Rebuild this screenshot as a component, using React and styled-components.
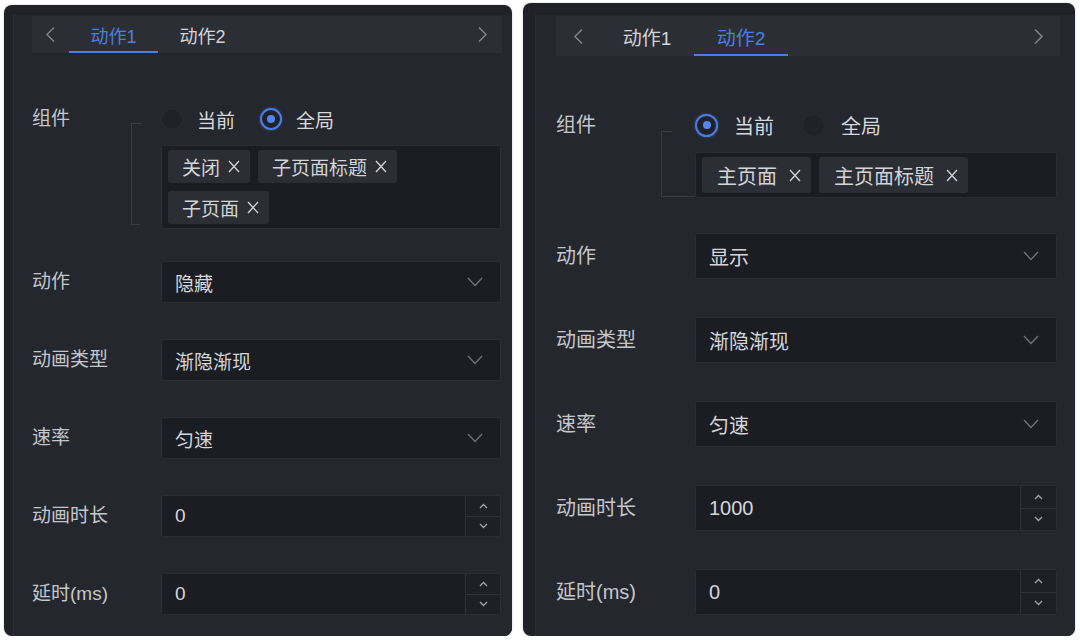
import React from "react"
import styled, { createGlobalStyle, ThemeProvider } from "styled-components"

const GlobalStyle = createGlobalStyle`
  html, body {
    margin: 0;
    background: #ffffff;
  }
  body {
    font-family: "Liberation Sans", "Noto Sans CJK SC", sans-serif;
    -webkit-font-smoothing: antialiased;
  }
  * {
    box-sizing: border-box;
  }
`

// the two screenshots were taken at slightly different zoom levels
const leftTheme = {
  top: 5,
  width: 508,
  height: 631,
  strip: 9,
  stripTop: 10,
  padL: 19,
  padR: 10,
  fieldInset: 1,
  tabBarH: 37,
  arrowW: 37,
  arrowEndW: 40,
  tabW: 89,
  tabFont: 18,
  font: 19,
  tagFont: 19,
  labelW: 129,
  radioGap: 54,
  radioRowH: 24,
  radioSize: 22,
  radioTextGap: 14,
  radioItemGap: 25,
  tagBoxGap: 14,
  tagH: 33,
  tagPadL: 14,
  tagPadR: 10,
  tagXGap: 8,
  formGap: 32,
  fieldH: 42,
  rowGap: 36,
  stepperW: 35,
  bracketLeft: -30,
  bracketTop: 16,
  bracketBottom: 4,
  bracketTopTick: 9,
  bracketBottomTick: 9,
}

const rightTheme = {
  top: 3,
  width: 552,
  height: 633,
  strip: 12,
  stripTop: 12,
  padL: 21,
  padR: 15,
  fieldInset: 3,
  tabBarH: 40,
  arrowW: 44,
  arrowEndW: 44,
  tabW: 94,
  tabFont: 19,
  font: 20,
  tagFont: 20,
  labelW: 139,
  radioGap: 56,
  radioRowH: 26,
  radioSize: 23,
  radioTextGap: 16,
  radioItemGap: 28,
  tagBoxGap: 14,
  tagH: 36,
  tagPadL: 15,
  tagPadR: 10,
  tagXGap: 12,
  formGap: 35,
  fieldH: 46,
  rowGap: 38,
  stepperW: 36,
  bracketLeft: -34,
  bracketTop: 19,
  bracketBottom: 1,
  bracketTopTick: 10,
  bracketBottomTick: 34,
}

const Page = styled.div`
  display: flex;
  align-items: flex-start;
  gap: 11px;
  padding-left: 4px;
`

const Panel = styled.section`
  margin-top: ${(p) => p.theme.top}px;
  width: ${(p) => p.theme.width}px;
  height: ${(p) => p.theme.height}px;
  padding: ${(p) => p.theme.stripTop}px 0 0 ${(p) => p.theme.strip}px;
  background: #202227;
  border-radius: 8px;
  overflow: hidden;
  display: flex;
  box-shadow: 0 0 2px rgba(0, 0, 0, 0.25);
`

const Body = styled.div`
  flex: 1;
  background: #25272e;
  border-left: 1px solid #2c2e35;
  padding: 1px ${(p) => p.theme.padR}px 0 ${(p) => p.theme.padL - 1}px;
  display: flex;
  flex-direction: column;
`

const TabBar = styled.div`
  display: flex;
  align-items: stretch;
  height: ${(p) => p.theme.tabBarH}px;
  background: #2c2e36;
`

const ArrowButton = styled.div`
  width: ${(p) => (p.$end ? p.theme.arrowEndW : p.theme.arrowW)}px;
  display: flex;
  align-items: center;
  justify-content: center;
  color: #80838b;
  margin-left: ${(p) => (p.$end ? "auto" : "0")};
`

const Tab = styled.div`
  width: ${(p) => p.theme.tabW}px;
  display: flex;
  align-items: center;
  justify-content: center;
  font-size: ${(p) => p.theme.tabFont}px;
  color: ${(p) => (p.$active ? "#4c7fe4" : "#d2d4d9")};
  box-shadow: ${(p) => (p.$active ? "inset 0 -2px 0 #4a7de2" : "none")};
  padding-top: 1px;
`

const Form = styled.div`
  margin-top: ${(p) => p.theme.radioGap}px;
  display: flex;
  flex-direction: column;
`

const Row = styled.div`
  display: flex;
  align-items: ${(p) => (p.$top ? "flex-start" : "center")};
  height: ${(p) => (p.$top ? "auto" : `${p.theme.fieldH}px`)};
  margin-right: ${(p) => p.theme.fieldInset}px;
`

const Label = styled.div`
  width: ${(p) => p.theme.labelW}px;
  flex: none;
  font-size: ${(p) => p.theme.font}px;
  color: #c4c6cb;
  line-height: ${(p) => p.theme.radioRowH}px;
  white-space: nowrap;
`

const ControlGroup = styled.div`
  flex: 1;
  position: relative;

  &::before {
    content: "";
    position: absolute;
    left: ${(p) => p.theme.bracketLeft}px;
    top: ${(p) => p.theme.bracketTop}px;
    bottom: ${(p) => p.theme.bracketBottom}px;
    width: ${(p) => p.theme.bracketTopTick}px;
    border-left: 1px solid #3a3c44;
    border-top: 1px solid #3a3c44;
  }

  &::after {
    content: "";
    position: absolute;
    left: ${(p) => p.theme.bracketLeft}px;
    bottom: ${(p) => p.theme.bracketBottom}px;
    width: ${(p) => p.theme.bracketBottomTick}px;
    border-top: 1px solid #3a3c44;
  }
`

const RadioRow = styled.div`
  display: flex;
  align-items: center;
  height: ${(p) => p.theme.radioRowH}px;
  gap: ${(p) => p.theme.radioItemGap}px;
`

const RadioItem = styled.label`
  display: flex;
  align-items: center;
  gap: ${(p) => p.theme.radioTextGap}px;
  font-size: ${(p) => p.theme.font}px;
  color: #d6d8dc;
`

const RadioCircle = styled.span`
  width: ${(p) => p.theme.radioSize}px;
  height: ${(p) => p.theme.radioSize}px;
  border-radius: 50%;
  background: #202228;
  border: ${(p) => (p.$checked ? "2px solid #4a7de4" : "1px solid #2a2c33")};
  display: flex;
  align-items: center;
  justify-content: center;
  box-shadow: ${(p) => (p.$checked ? "0 0 3px rgba(74, 125, 228, 0.5)" : "none")};

  &::after {
    content: "";
    display: ${(p) => (p.$checked ? "block" : "none")};
    width: 8px;
    height: 8px;
    border-radius: 50%;
    background: #5287f0;
  }
`

const TagBox = styled.div`
  margin-top: ${(p) => p.theme.tagBoxGap}px;
  display: flex;
  flex-wrap: wrap;
  gap: 8px;
  padding: 4px 6px;
  background: #1b1d23;
  border: 1px solid #2b2d34;
  border-radius: 2px;
`

const Tag = styled.span`
  display: inline-flex;
  align-items: center;
  gap: ${(p) => p.theme.tagXGap}px;
  height: ${(p) => p.theme.tagH}px;
  padding: 0 ${(p) => p.theme.tagPadR}px 0 ${(p) => p.theme.tagPadL}px;
  background: #2c2e35;
  border-radius: 3px;
  font-size: ${(p) => p.theme.tagFont}px;
  color: #d2d4d8;
  white-space: nowrap;
`

const FieldList = styled.div`
  margin-top: ${(p) => p.theme.formGap}px;
  display: flex;
  flex-direction: column;
  gap: ${(p) => p.theme.rowGap}px;
`

const FieldBox = styled.div`
  flex: 1;
  height: 100%;
  display: flex;
  align-items: center;
  background: #1b1d23;
  border: 1px solid #2b2d34;
  border-radius: 2px;
  font-size: ${(p) => p.theme.font}px;
  color: #d4d6da;
`

const FieldValue = styled.span`
  flex: 1;
  padding-left: 13px;
`

const Chevron = styled.span`
  display: flex;
  color: #6f727a;
  padding-right: 17px;
`

const Stepper = styled.div`
  width: ${(p) => p.theme.stepperW}px;
  height: 100%;
  display: flex;
  flex-direction: column;
  border-left: 1px solid #30323a;
`

const StepButton = styled.div`
  flex: 1;
  display: flex;
  align-items: center;
  justify-content: center;
  color: #a2a4aa;
  background: #1e2026;
  & + & {
    border-top: 1px solid #30323a;
  }
`

const TabArrow = ({ dir }) => (
  <svg width="11" height="17" viewBox="0 0 11 17" fill="none">
    <path
      d={dir === "left" ? "M9 1.5 L2 8.5 L9 15.5" : "M2 1.5 L9 8.5 L2 15.5"}
      stroke="currentColor"
      strokeWidth="1.5"
    />
  </svg>
)

const DownChevron = () => (
  <svg width="16" height="10" viewBox="0 0 16 10" fill="none">
    <path d="M1 1 L8 8.5 L15 1" stroke="currentColor" strokeWidth="1.3" />
  </svg>
)

const SmallArrow = ({ up }) => (
  <svg width="9" height="6" viewBox="0 0 9 6" fill="none">
    <path
      d={up ? "M1 5 L4.5 1.5 L8 5" : "M1 1 L4.5 4.5 L8 1"}
      stroke="currentColor"
      strokeWidth="1.3"
    />
  </svg>
)

const CloseX = () => (
  <svg width="12" height="13" viewBox="0 0 12 13" fill="none">
    <path d="M1 1 L11 12 M11 1 L1 12" stroke="currentColor" strokeWidth="1.3" />
  </svg>
)

const Select = ({ value }) => (
  <FieldBox>
    <FieldValue>{value}</FieldValue>
    <Chevron>
      <DownChevron />
    </Chevron>
  </FieldBox>
)

const NumberInput = ({ value }) => (
  <FieldBox>
    <FieldValue>{value}</FieldValue>
    <Stepper>
      <StepButton>
        <SmallArrow up />
      </StepButton>
      <StepButton>
        <SmallArrow />
      </StepButton>
    </Stepper>
  </FieldBox>
)

const ActionPanel = ({ activeTab, scope, tags, action, duration }) => (
  <Panel>
    <Body>
      <TabBar>
        <ArrowButton>
          <TabArrow dir="left" />
        </ArrowButton>
        {["动作1", "动作2"].map((name, i) => (
          <Tab key={name} $active={i === activeTab}>
            {name}
          </Tab>
        ))}
        <ArrowButton $end>
          <TabArrow dir="right" />
        </ArrowButton>
      </TabBar>

      <Form>
        <Row $top>
          <Label>组件</Label>
          <ControlGroup>
            <RadioRow>
              <RadioItem>
                <RadioCircle $checked={scope === "current"} />
                当前
              </RadioItem>
              <RadioItem>
                <RadioCircle $checked={scope === "global"} />
                全局
              </RadioItem>
            </RadioRow>
            <TagBox>
              {tags.map((t) => (
                <Tag key={t}>
                  {t}
                  <CloseX />
                </Tag>
              ))}
            </TagBox>
          </ControlGroup>
        </Row>

        <FieldList>
          <Row>
            <Label>动作</Label>
            <Select value={action} />
          </Row>
          <Row>
            <Label>动画类型</Label>
            <Select value="渐隐渐现" />
          </Row>
          <Row>
            <Label>速率</Label>
            <Select value="匀速" />
          </Row>
          <Row>
            <Label>动画时长</Label>
            <NumberInput value={duration} />
          </Row>
          <Row>
            <Label>延时(ms)</Label>
            <NumberInput value="0" />
          </Row>
        </FieldList>
      </Form>
    </Body>
  </Panel>
)

const App = () => (
  <>
    <GlobalStyle />
    <Page>
      <ThemeProvider theme={leftTheme}>
        <ActionPanel
          activeTab={0}
          scope="global"
          tags={["关闭", "子页面标题", "子页面"]}
          action="隐藏"
          duration="0"
        />
      </ThemeProvider>
      <ThemeProvider theme={rightTheme}>
        <ActionPanel
          activeTab={1}
          scope="current"
          tags={["主页面", "主页面标题"]}
          action="显示"
          duration="1000"
        />
      </ThemeProvider>
    </Page>
  </>
)

export default App
